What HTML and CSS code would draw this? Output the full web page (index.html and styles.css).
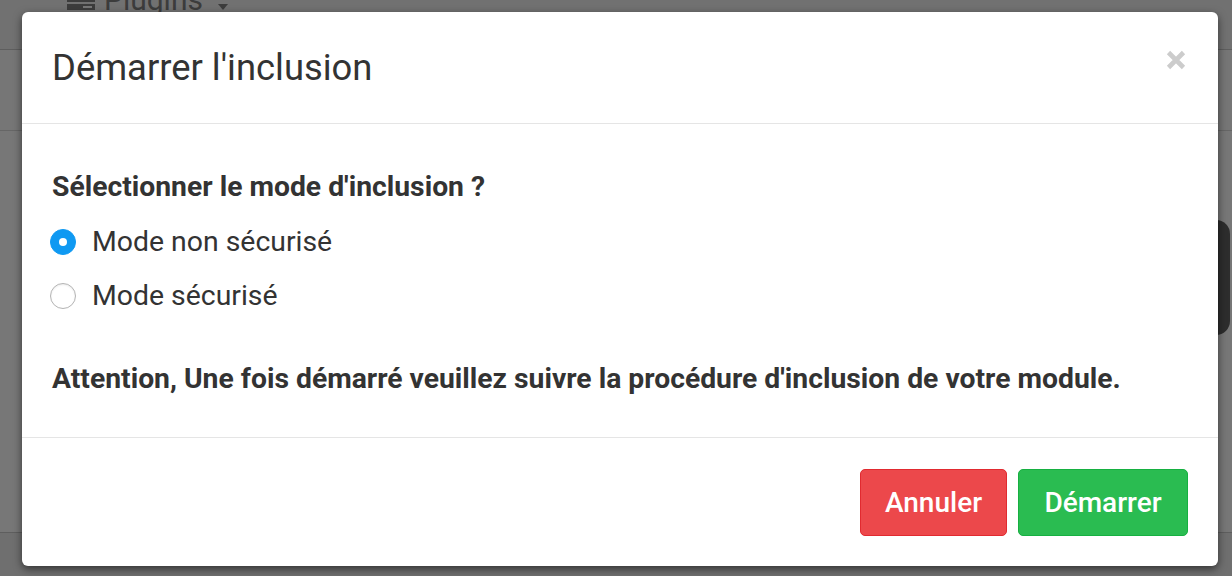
FILE: index.html
```html
<!DOCTYPE html>
<html lang="fr">
<head>
<meta charset="utf-8">
<title>Démarrer l'inclusion</title>
<link rel="stylesheet" href="styles.css">
</head>
<body>
<div class="page">
  <div class="navbar">
    <div class="nav-item">
      <svg class="nav-icon" width="28" height="10" viewBox="0 0 28 10"><rect x="0" y="-4" width="28" height="6" fill="#3c3c3c"/><rect x="0" y="4" width="28" height="6" fill="#3c3c3c"/><rect x="16" y="6" width="9" height="2" fill="#777"/></svg>
      <span class="nav-label">Plugins</span>
      <svg class="nav-caret" width="10" height="6" viewBox="0 0 10 6"><path d="M0 0h10L5 6z" fill="#3c3c3c"/></svg>
    </div>
  </div>
  <div class="subbar"></div>
  <div class="content">
    <div class="side-tab"></div>
  </div>
  <div class="lower"></div>
</div>

<div class="modal">
  <div class="modal-header">
    <h4 class="modal-title">Démarrer l'inclusion</h4>
    <button class="close" type="button" aria-label="Fermer">
      <svg width="20" height="20" viewBox="0 0 20 20"><path d="M2.5 2.5L17.5 17.5M17.5 2.5L2.5 17.5" stroke="#cccccc" stroke-width="4.6" stroke-linecap="butt"/></svg>
    </button>
  </div>
  <div class="modal-body">
    <div class="question">Sélectionner le mode d'inclusion ?</div>
    <label class="radio-row"><span class="radio checked"></span><span>Mode non sécurisé</span></label>
    <label class="radio-row"><span class="radio"></span><span>Mode sécurisé</span></label>
    <div class="warning">Attention, Une fois démarré veuillez suivre la procédure d'inclusion de votre module.</div>
  </div>
  <div class="modal-footer">
    <button class="btn btn-danger" type="button">Annuler</button>
    <button class="btn btn-success" type="button">Démarrer</button>
  </div>
</div>
</body>
</html>
```

FILE: styles.css
```css
html, body {
  margin: 0;
  padding: 0;
  width: 1232px;
  height: 576px;
  overflow: hidden;
}
body {
  background: #737373;
  font-family: Roboto, "Liberation Sans", Arial, sans-serif;
  color: #333;
  position: relative;
}

.page {
  display: flex;
  flex-direction: column;
  height: 576px;
}
.navbar {
  height: 50px;
  border-bottom: 1px solid #5e5e5e;
  background: #717171;
  box-sizing: border-box;
}
.nav-item {
  display: flex;
  align-items: flex-end;
  height: 10px;
  padding-left: 67px;
}
.nav-icon { display: block; }
.nav-label {
  font-size: 30px;
  line-height: 30px;
  color: #3c3c3c;
  margin-left: 9px;
  margin-bottom: -5px;
}
.nav-caret { margin-left: 15px; margin-bottom: 0; }
.subbar {
  height: 80px;
  border-bottom: 1px solid #666;
  background: #767676;
}
.content {
  height: 401px;
  border-bottom: 1px solid #5e5e5e;
  background: #777;
  display: flex;
  justify-content: flex-end;
  align-items: flex-start;
}
.side-tab {
  margin-top: 89px;
  margin-right: 2px;
  width: 40px;
  height: 115px;
  background: #2d2d2d;
  border-radius: 0 14px 14px 0;
}
.lower { flex: 1; background: #6f6f6f; }

.modal {
  position: absolute;
  left: 22px;
  top: 12px;
  width: 1196px;
  height: 554px;
  background: #fff;
  border-radius: 6px;
  box-shadow: 0 3px 9px rgba(0,0,0,0.55);
  display: flex;
  flex-direction: column;
  box-sizing: border-box;
}
.modal-header {
  height: 112px;
  box-sizing: border-box;
  border-bottom: 1px solid #e5e5e5;
  display: flex;
  align-items: center;
  justify-content: space-between;
  padding: 0 32px 0 30px;
}
.modal-title {
  margin: 0;
  font-size: 36.4px;
  font-weight: 400;
  line-height: 42px;
  color: #333;
  padding-top: 1px;
}
.close {
  border: 0;
  background: none;
  padding: 0;
  margin-top: -16px;
  display: flex;
  cursor: pointer;
}

.modal-body {
  padding: 47px 30px 0 30px;
  height: 314px;
  box-sizing: border-box;
  border-bottom: 1px solid #e5e5e5;
}
.question {
  font-size: 28.3px;
  font-weight: 700;
  line-height: 32px;
  margin-bottom: 12px;
}
.radio-row {
  display: flex;
  align-items: center;
  height: 54px;
  font-size: 28.4px;
  line-height: 32px;
}
.radio {
  width: 26px;
  height: 26px;
  box-sizing: border-box;
  border-radius: 50%;
  border: 1px solid #b3b3b3;
  background: #fff;
  margin-right: 16px;
  margin-left: -2px;
  box-shadow: inset 0 1px 2px rgba(0,0,0,0.08);
  display: flex;
  align-items: center;
  justify-content: center;
}
.radio.checked {
  background: #0f99f2;
  border-color: #0f99f2;
  box-shadow: none;
}
.radio.checked::after {
  content: "";
  width: 8px;
  height: 8px;
  border-radius: 50%;
  background: #fff;
}
.warning {
  margin-top: 40px;
  font-size: 28.3px;
  font-weight: 700;
  line-height: 32px;
}

.modal-footer {
  flex: 1;
  display: flex;
  justify-content: flex-end;
  align-items: center;
  padding: 0 30px;
  gap: 11px;
}
.btn {
  height: 67px;
  border-radius: 5px;
  font-family: Roboto, "Liberation Sans", Arial, sans-serif;
  font-size: 28px;
  font-weight: 500;
  color: #fff;
  padding: 0 20px;
  cursor: pointer;
}
.btn-danger {
  width: 147px;
  background: #ec484b;
  border: 1px solid #e12a30;
}
.btn-success {
  width: 170px;
  background: #2abc51;
  border: 1px solid #16b041;
}
```
